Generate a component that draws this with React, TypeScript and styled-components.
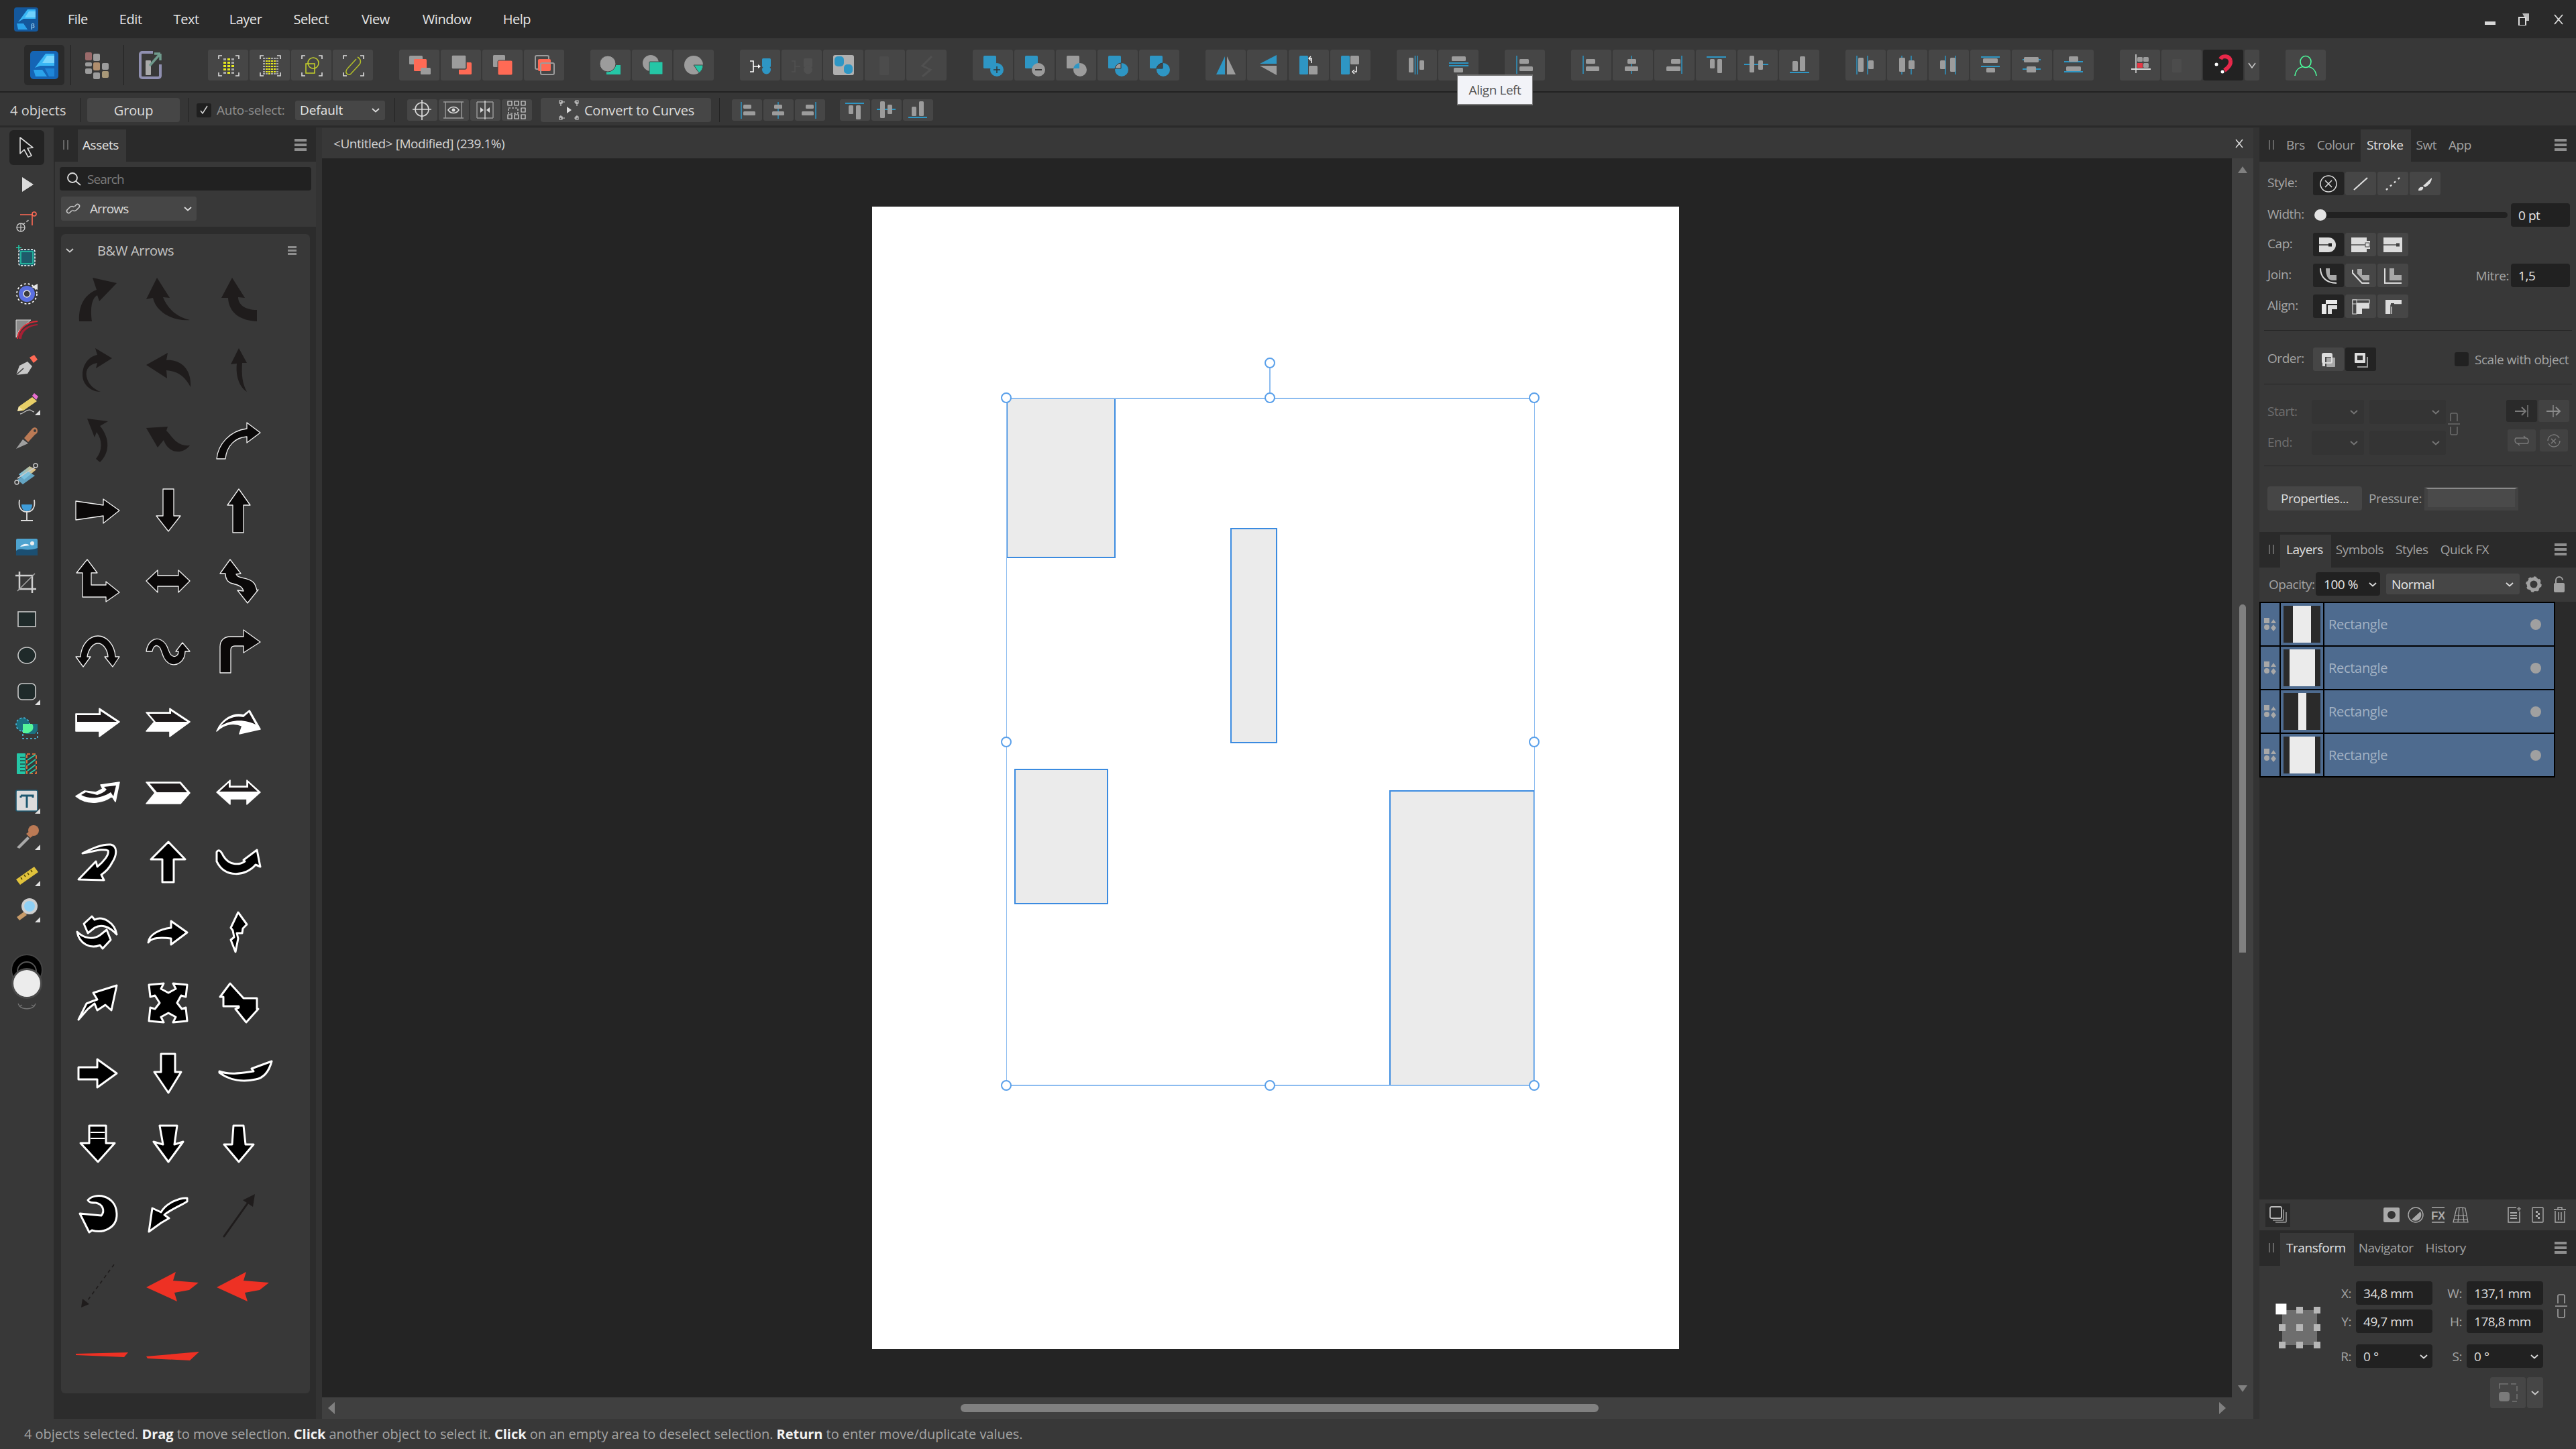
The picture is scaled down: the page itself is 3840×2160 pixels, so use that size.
import React from "react";
import styled, { createGlobalStyle } from "styled-components";

const GREY = "#9c9c9c";
const LIGHT = "#dcdcdc";
const CORAL = "#ff6a55";
const TEAL = "#25c6a6";
const BLUE = "#2e96c4";
const DIM = "#505050";

const GlobalStyle = createGlobalStyle`
  html, body { margin: 0; padding: 0; background: #383838; }
  body { font-family: "Open Sans", "Noto Sans", sans-serif; font-size: 19px; letter-spacing: -0.45px; }
  * { box-sizing: border-box; }
`;

/* ---------- small svg helpers ---------- */

type BoxProps = { x: number; y: number; w: number; h: number; c?: string; r?: number };
const B = ({ x, y, w, h, c = GREY, r = 1.5 }: BoxProps) => <rect x={x} y={y} width={w} height={h} rx={r} fill={c} />;
const Ln = ({ x1, y1, x2, y2, c = BLUE, s = 1.5 }: { x1: number; y1: number; x2: number; y2: number; c?: string; s?: number }) => (
  <line x1={x1} y1={y1} x2={x2} y2={y2} stroke={c} strokeWidth={s} />
);
const Corners = () => (
  <path d="M16 14V9h5M41 9h5v5M16 34v5h5M41 39h5v-5" fill="none" stroke={LIGHT} strokeWidth="1.6" />
);
const ChevSvg = styled.svg`
  flex: none;
`;
const Chev = ({ c = "#dcdcdc", size = 14 }: { c?: string; size?: number }) => (
  <ChevSvg width={size} height={size} viewBox="0 0 14 14"><path d="M2 5l5 4.5L12 5" fill="none" stroke={c} strokeWidth="1.8" /></ChevSvg>
);

const dotGrid = (cols: number[], rows: number[], w: number, h: number, hit: (c: number, r: number) => boolean) =>
  cols.map((x, ci) => rows.map((y, ri) => <rect key={`${ci}-${ri}`} x={x} y={y} width={w} height={h} fill={hit(ci, ri) ? "#e6e81e" : "#a8a8a8"} />));

/* ---------- main toolbar data ---------- */

type ToolItem = { icon?: React.ReactNode; dark?: boolean; narrow?: boolean };

const mainGroups: ToolItem[][] = [
  [
    { icon: <><Corners />{dotGrid([23, 29, 35], [13, 18, 23, 28, 33], 4, 3, (c, r) => c === 1 || (r > 0 && r < 4 && c === 0) || (r === 2 && c === 2))}</> },
    { icon: <><Corners />{dotGrid([20, 24, 28, 32, 36, 40], [12, 16, 20, 24, 28, 32, 35], 3, 2, (c, r) => (c > 0 && c < 5 && r > 0 && r < 6) || c === 2)}</> },
    { icon: <><Corners /><circle cx="33" cy="20" r="8" fill="none" stroke="#c6d22a" strokeWidth="1.5" /><rect x="22" y="21" width="13" height="14" fill="none" stroke="#c6d22a" strokeWidth="1.5" /></> },
    { icon: <><Corners /><path d="M37 11c5 3 6 8 2 12L27 36c-3 3-8 0-7-4 0-2 1-3 3-5l12-13" fill="none" stroke="#b3bf28" strokeWidth="1.5" /></> },
  ],
  [
    { icon: <><B x={15} y={9} w={20} h={13} /><B x={22} y={14} w={19} h={18} c={CORAL} /><B x={32} y={27} w={15} h={10} /></> },
    { icon: <><B x={27} y={19} w={19} h={18} c={CORAL} /><rect x="16" y="8" width="22" height="21" rx="2" fill="#9c9c9c" stroke="#454545" strokeWidth="1.5" /></> },
    { icon: <><B x={16} y={8} w={18} h={18} /><rect x="23" y="16" width="22" height="22" rx="2" fill={CORAL} stroke="#454545" strokeWidth="1" /></> },
    { icon: <><rect x="17" y="9" width="20" height="20" rx="2" fill="none" stroke={GREY} strokeWidth="2" /><rect x="21" y="14" width="19" height="18" rx="2" fill={CORAL} /><rect x="25" y="20" width="20" height="17" rx="2" fill="none" stroke={GREY} strokeWidth="2" /></> },
  ],
  [
    { icon: <><path d="M24 23h21v14H24z" fill={TEAL} /><circle cx="26" cy="21" r="12" fill={GREY} stroke="#454545" strokeWidth="1" /></> },
    { icon: <><circle cx="28" cy="20" r="12" fill={GREY} /><rect x="26" y="18" width="20" height="19" rx="1" fill={TEAL} stroke="#454545" strokeWidth="1" /></> },
    { icon: <><circle cx="30" cy="23" r="14" fill={GREY} /><path d="M30 23h14a14 14 0 0 1-6 11.5L30 23z" fill={TEAL} stroke="#454545" strokeWidth="1" /></> },
  ],
  [
    { icon: <><path d="M15 17h5v16h-5M20 25h8" fill="none" stroke="#fff" strokeWidth="1.6" /><path d="M27 22l4 3-4 3z" fill="#fff" /><B x={33} y={13} w={13} h={13} c={BLUE} /><circle cx="39.5" cy="30" r="6.5" fill={BLUE} /></> },
    { icon: <><path d="M15 17h5v16h-5M20 25h8" fill="none" stroke={DIM} strokeWidth="1.6" /><B x={33} y={13} w={13} h={13} c={DIM} /><circle cx="39.5" cy="30" r="6.5" fill={DIM} /></> },
    { icon: <><B x={15} y={8} w={31} h={30} c="#b0b0b0" r={3} /><B x={17} y={10} w={14} h={15} c={BLUE} r={5} /><B x={31} y={22} w={13} h={14} c={BLUE} r={5} /></> },
    { icon: <B x={22} y={10} w={14} h={28} c="#4c4c4c" /> },
    { icon: <path d="M38 10L24 24l12 6-12 10" fill="none" stroke="#505050" strokeWidth="3" /> },
  ],
  [
    { icon: <><circle cx="36" cy="30" r="10" fill={BLUE} /><B x={16} y={9} w={19} h={19} c={BLUE} /><Ln x1={36} y1={25} x2={36} y2={35} c="#333" /><Ln x1={31} y1={30} x2={41} y2={30} c="#333" /></> },
    { icon: <><B x={16} y={9} w={19} h={19} c={BLUE} /><circle cx="36" cy="30" r="10" fill={GREY} /><Ln x1={31} y1={30} x2={41} y2={30} c="#333" s={2} /></> },
    { icon: <><circle cx="36" cy="30" r="10" fill={GREY} /><B x={16} y={9} w={19} h={19} c={GREY} /><path d="M26 28h9v-8a10 10 0 0 0-9 8z" fill={BLUE} /></> },
    { icon: <><B x={16} y={9} w={19} h={19} c={BLUE} /><circle cx="36" cy="30" r="10" fill={BLUE} /><path d="M26 28h9v-8a10 10 0 0 0-9 8z" fill={GREY} stroke="#333" strokeWidth="1" /></> },
    { icon: <><B x={16} y={9} w={19} h={19} c={BLUE} /><circle cx="36" cy="30" r="10" fill={BLUE} /><path d="M26 28h9v-8a10 10 0 0 0-9 8z" fill="#454545" stroke="#333" strokeWidth="1" /></> },
  ],
  [
    { icon: <><path d="M29 10v27H16z" fill={BLUE} /><path d="M32 10v27h13z" fill={GREY} /></> },
    { icon: <><path d="M44 8v13H19z" fill={BLUE} /><path d="M44 38V24H19z" fill={GREY} /></> },
    { icon: <><B x={16} y={9} w={13} h={28} c={BLUE} /><B x={30} y={24} w={13} h={13} /><path d="M34 20v-7h-3M33 10l-3 3 3 3" fill="none" stroke="#fff" strokeWidth="1.4" /></> },
    { icon: <><B x={16} y={9} w={13} h={28} c={BLUE} /><B x={30} y={9} w={13} h={13} /><path d="M39 25v8h-3M36 30l-3 3 3 3" fill="none" stroke="#fff" strokeWidth="1.4" /></> },
  ],
  [
    { icon: <><B x={18} y={12} w={7} h={22} /><Ln x1={27.5} y1={9} x2={27.5} y2={37} /><Ln x1={31} y1={9} x2={31} y2={37} /><B x={34} y={16} w={7} h={14} /></> },
    { icon: <><B x={20} y={10} w={21} h={7} /><Ln x1={16} y1={20} x2={45} y2={20} s={2} /><Ln x1={16} y1={24} x2={45} y2={24} s={2} /><B x={23} y={27} w={14} h={7} /></> },
  ],
  [
    { icon: <><Ln x1={18} y1={9} x2={18} y2={36} /><B x={22} y={14} w={14} h={7} /><B x={22} y={25} w={20} h={7} /></> },
  ],
  [
    { icon: <><Ln x1={18} y1={9} x2={18} y2={36} /><B x={22} y={14} w={14} h={7} /><B x={22} y={25} w={20} h={7} /></> },
    { icon: <><Ln x1={28} y1={9} x2={28} y2={36} /><B x={22} y={14} w={13} h={7} /><B x={18} y={25} w={20} h={7} /></> },
    { icon: <><Ln x1={41} y1={9} x2={41} y2={36} /><B x={25} y={14} w={14} h={7} /><B x={18} y={25} w={21} h={7} /></> },
    { icon: <><Ln x1={16} y1={11} x2={45} y2={11} s={2} /><B x={21} y={14} w={7} h={14} /><B x={32} y={14} w={7} h={21} /></> },
    { icon: <><Ln x1={10} y1={22} x2={46} y2={22} s={2} /><B x={18} y={9} w={7} h={25} /><B x={31} y={16} w={7} h={14} /></> },
    { icon: <><Ln x1={16} y1={34} x2={45} y2={34} s={2} /><B x={20} y={17} w={8} h={15} /><B x={31} y={10} w={8} h={22} /></> },
  ],
  [
    { icon: <><Ln x1={17} y1={9} x2={17} y2={37} /><Ln x1={33} y1={9} x2={33} y2={37} /><B x={19} y={12} w={8} h={21} /><B x={34} y={16} w={8} h={13} /></> },
    { icon: <><Ln x1={22} y1={9} x2={22} y2={37} /><Ln x1={36} y1={9} x2={36} y2={37} /><B x={18} y={12} w={9} h={21} /><B x={32} y={16} w={9} h={13} /></> },
    { icon: <><Ln x1={25} y1={9} x2={25} y2={37} /><Ln x1={40} y1={9} x2={40} y2={37} /><B x={17} y={16} w={8} h={13} /><B x={32} y={12} w={8} h={21} /></> },
    { icon: <><Ln x1={16} y1={11} x2={44} y2={11} s={2} /><Ln x1={16} y1={25} x2={44} y2={25} s={2} /><B x={19} y={13} w={22} h={7} /><B x={24} y={27} w={13} h={7} /></> },
    { icon: <><Ln x1={16} y1={15} x2={43} y2={15} s={2} /><Ln x1={16} y1={29} x2={43} y2={29} s={2} /><B x={18} y={11} w={22} h={8} /><B x={22} y={25} w={14} h={9} /></> },
    { icon: <><Ln x1={16} y1={18} x2={44} y2={18} s={2} /><Ln x1={16} y1={33} x2={44} y2={33} s={2} /><B x={23} y={10} w={14} h={8} /><B x={19} y={25} w={22} h={7} /></> },
  ],
  [
    { icon: <><B x={26} y={11} w={8} h={7} /><B x={35} y={11} w={8} h={7} /><B x={26} y={20} w={8} h={7} c="#e63946" r={0} /><B x={35} y={20} w={8} h={7} /><Ln x1={24} y1={7} x2={24} y2={35} c="#ddd" /><Ln x1={17} y1={29} x2={46} y2={29} c="#ddd" s={2} /></> },
    { icon: <B x={16} y={14} w={14} h={20} c="#4c4c4c" /> },
    { dark: true, icon: <><path d="M26 14c3-6 14-5 15 3 1 6-5 11-9 14" fill="none" stroke="#e8284a" strokeWidth="6" /><circle cx="20" cy="22" r="2.5" fill="#fff" /><circle cx="29" cy="33" r="2.5" fill="#fff" /></> },
    { narrow: true, icon: <path d="M6 20l5 7 5-7" fill="none" stroke="#cfcfcf" strokeWidth="1.4" /> },
  ],
  [
    { icon: <><ellipse cx="30" cy="18" rx="8" ry="8.5" fill="none" stroke="#4dff9e" strokeWidth="1.6" /><path d="M14 39c1-8 6-13 13-13.5M46 39c-1-8-6-13-13-13.5" fill="none" stroke="#4dff9e" strokeWidth="1.6" /></> },
  ],
];

const ctxIcons = [
  <><circle cx="22" cy="15" r="10" fill="none" stroke={LIGHT} strokeWidth="1.6" /><path d="M22 1v30M8 15h28" stroke={LIGHT} strokeWidth="1.6" /></>,
  <><path d="M7 4h30M7 28h30M10 4v24M34 4v24" stroke={GREY} strokeWidth="1.4" /><path d="M14 16c4-6 12-6 16 0-4 6-12 6-16 0z" fill="none" stroke={LIGHT} strokeWidth="1.6" /><circle cx="22" cy="16" r="2.5" fill={LIGHT} /></>,
  <><path d="M10 4h24M10 28h24M10 4v24M34 4v24" fill="none" stroke={GREY} strokeWidth="1.4" /><path d="M22 2v28" stroke={LIGHT} strokeWidth="1.4" /><path d="M15 12l5 4-5 4zM29 12l-5 4 5 4z" fill={LIGHT} /></>,
  <><path d="M9 3h6v6H9zM19 3h6v6h-6zM29 3h6v6h-6zM29 13h6v6h-6zM29 23h6v6h-6zM9 23h6v6H9zM19 23h6v6h-6z" fill="none" stroke={LIGHT} strokeWidth="1.2" /><path d="M10 13h14v8H10z" fill="none" stroke={LIGHT} strokeWidth="1.2" strokeDasharray="3 2" /></>,
];
const ctxAlign = [
  <><Ln x1={14} y1={4} x2={14} y2={29} /><B x={17} y={8} w={12} h={6} /><B x={17} y={18} w={18} h={6} /></>,
  <><Ln x1={22} y1={4} x2={22} y2={29} /><B x={16} y={8} w={12} h={6} /><B x={13} y={18} w={18} h={6} /></>,
  <><Ln x1={31} y1={4} x2={31} y2={29} /><B x={16} y={8} w={12} h={6} /><B x={10} y={18} w={18} h={6} /></>,
  <><Ln x1={8} y1={6} x2={36} y2={6} s={2} /><B x={13} y={9} w={7} h={13} /><B x={24} y={9} w={7} h={21} /></>,
  <><Ln x1={8} y1={15} x2={36} y2={15} s={2} /><B x={13} y={3} w={7} h={25} /><B x={24} y={8} w={7} h={14} /></>,
  <><Ln x1={8} y1={27} x2={36} y2={27} s={2} /><B x={13} y={11} w={7} h={14} /><B x={24} y={3} w={7} h={22} /></>,
];

/* ---------- left tools ---------- */

type ToolDef = { icon: React.ReactNode; more?: boolean; active?: boolean };
const tools: ToolDef[] = [
  { active: true, icon: <path d="M10 5v24l6-6 6 11 5-2-6-11 8-1z" fill="#1c1c1c" stroke="#dcdcdc" strokeWidth="1.6" strokeLinejoin="round" /> },
  { icon: <path d="M13 9v22l17-11z" fill="#dcdcdc" /> },
  { icon: <><path d="M10 11h18v16" fill="none" stroke={CORAL} strokeWidth="1.6" /><circle cx="31" cy="10" r="3" fill="none" stroke={CORAL} strokeWidth="1.6" /><path d="M14 26l11-9" stroke="#bbb" strokeWidth="1.6" strokeDasharray="4 3" /><circle cx="11" cy="30" r="6" fill="none" stroke="#ccc" strokeWidth="1.4" /><path d="M5 30h12M11 24v12" stroke="#ccc" strokeWidth="1.2" /></> },
  { icon: <><rect x="8" y="9" width="24" height="24" rx="3" fill="#1e5b6b" stroke="#fff" strokeWidth="1.5" strokeDasharray="3 2" /><rect x="11" y="12" width="18" height="18" fill="none" stroke={TEAL} strokeWidth="1.6" /><path d="M8 2v8M4 6h8" stroke={TEAL} strokeWidth="1.6" /></> },
  { icon: <><circle cx="20" cy="21" r="15" fill="none" stroke="#fff" strokeWidth="1.6" strokeDasharray="3 3" /><ellipse cx="20" cy="21" rx="12" ry="12" fill="#5a6fe0" /><circle cx="20" cy="21" r="5" fill="#3a3a3a" stroke="#ddd" strokeWidth="1.6" /><path d="M36 6v9l-9-4z" fill="#e6e6e6" /></> },
  { icon: <><path d="M4 6h22L8 22 4 32z" fill="#8a8a8a" stroke="#ddd" strokeWidth="1" /><path d="M6 34c1-14 12-25 30-26" fill="none" stroke="#e02b36" strokeWidth="2" /><path d="M12 34c1-12 12-19 24-20v-2C20 13 8 22 8 34z" fill="#a81f34" /></> },
  { icon: <><path d="M4 34l5-14 12-6 7 7-7 11z" fill="#c8c8c8" /><path d="M4 34l11-10" stroke="#333" strokeWidth="1.4" /><path d="M24 8l7-4 5 7-6 5z" fill={CORAL} /></> },
  { more: true, icon: <><path d="M6 34l2-7 20-14 7 6-20 14z" fill="#e8cf67" /><path d="M6 34l2-7 6 5z" fill="#f0e3b0" /><path d="M28 11l3-4 6 5-3 5z" fill="#e86fd0" /><path d="M10 38c6-1 8-6 14-6 3 0 4 3 7 3" fill="none" stroke="#bbb" strokeWidth="1.3" /></> },
  { icon: <><path d="M4 36l10-14 8 6z" fill="#a0a0a0" /><path d="M16 20L28 6c3-3 8-2 8 3 0 3-1 4-4 6L22 26z" fill="#bb7a55" /><circle cx="32" cy="9" r="2" fill="#3a3a3a" /></> },
  { icon: <><path d="M8 20L24 8l10 5-18 15z" fill="url(#toolGrad)" /><path d="M6 26L32 10" stroke="#ccc" strokeWidth="1.6" /><path d="M6 28l16-12 10 6-18 13z" fill="#6fc0e6" opacity=".8" /><circle cx="5" cy="32" r="3" fill="none" stroke="#ccc" strokeWidth="1.4" /><circle cx="33" cy="7" r="3" fill="none" stroke="#ccc" strokeWidth="1.4" /></> },
  { icon: <><path d="M9 4c-2 12 3 18 11 18s13-6 11-18" fill="none" stroke="#ddd" strokeWidth="1.8" /><path d="M12 11h16c0 6-3 10-8 10s-8-4-8-10z" fill="#3f9cd8" /><path d="M20 22v12M11 35h18" stroke="#ddd" strokeWidth="1.8" /></> },
  { icon: <><rect x="4" y="8" width="32" height="25" rx="2" fill="#4ea3cf" /><path d="M4 26c8-6 12 2 32-4v11H4z" fill="#1b4f72" /><circle cx="28" cy="15" r="3" fill="#eee" /><path d="M10 20c3-4 10-6 14-2z" fill="#eaf3f9" /></> },
  { icon: <><path d="M9 3v26h25M3 9h25v26" fill="none" stroke="#cfcfcf" strokeWidth="2.5" /><path d="M6 32L32 6" stroke="#aaa" strokeWidth="1.4" /></> },
  { icon: <rect x="7" y="9" width="26" height="22" fill="#1f2a2a" stroke="#c8c8c8" strokeWidth="1.6" /> },
  { icon: <ellipse cx="20" cy="20" rx="13" ry="12" fill="#1f2a2a" stroke="#c8c8c8" strokeWidth="1.6" /> },
  { more: true, icon: <rect x="7" y="8" width="26" height="24" rx="6" fill="#1f2a2a" stroke="#c8c8c8" strokeWidth="1.6" /> },
  { icon: <><circle cx="14" cy="15" r="10" fill="#1b6f80" stroke="#52c2e8" strokeWidth="1.5" strokeDasharray="3 3" /><path d="M14 24h22v12H14z" fill="none" stroke="#52c2e8" strokeWidth="1.5" strokeDasharray="3 3" /><path d="M14 14h22v10l-4 5H18z" fill="#1b6f80" /><path d="M14 14h14c2 3 2 7 0 10l-6 4h-8z" fill="#56f59a" /></> },
  { icon: <><rect x="5" y="4" width="13" height="31" rx="1" fill={TEAL} /><path d="M10 10h7M10 15h7M10 20h7M10 25h7M10 30h7" stroke="#1f4a44" strokeWidth="1.4" /><rect x="20" y="5" width="14" height="29" fill="none" stroke="#ff7a3c" strokeWidth="1.6" strokeDasharray="5 3" /><path d="M21 14l12-8M21 22l12-9M21 30l12-9M24 34l9-6" stroke={TEAL} strokeWidth="2" /></> },
  { more: true, icon: <><rect x="4" y="5" width="32" height="31" rx="2" fill="#dcdcdc" stroke="#1d5870" strokeWidth="1.6" /><path d="M11 13h18v3M11 13v3M20 13v18" fill="none" stroke="#1d5870" strokeWidth="3" /></> },
  { more: true, icon: <><path d="M5 36l16-16 3 3L9 38z" fill="#a8a8a8" /><circle cx="30" cy="11" r="8" fill="#bb7a55" /><path d="M19 16l6 6 4-3-6-6z" fill="#bb7a55" /></> },
  { more: true, icon: <><path d="M4 30L31 11l6 8-27 19z" fill="#e0c23c" /><path d="M11 27l2 3M16 23l2 3M21 20l2 3M26 16l2 3" stroke="#5a4a00" strokeWidth="1.6" /></> },
  { more: true, icon: <><path d="M5 32l11-8 4 5-11 8z" fill="#c69a68" /><circle cx="24" cy="16" r="12" fill="#cfcfcf" /><circle cx="24" cy="16" r="8" fill="#8fd0f5" /></> },
];

/* ---------- asset arrows ---------- */

type ArrowKind = "dark" | "thin" | "split" | "thick" | "red";
type ArrowDef = { d: string; kind: ArrowKind; extra?: React.ReactNode };

const splitTop = (d: string) => <path d={d} fill="#1f1b1c" />;

const arrows: ArrowDef[] = [
  { kind: "dark", d: "M25 85C24 62 32 46 51 38L45 20 81 28 55 55 52 46C42 52 42 70 44 85Z" },
  { kind: "dark", d: "M36 20 55 50 45 49C50 62 62 78 85 83 60 85 35 72 30 50L20 52Z" },
  { kind: "dark", d: "M43 20 62 50 52 49C52 60 62 68 80 68L80 85C55 84 38 72 37 50L27 50Z" },
  { kind: "dark", d: "M74 35 50 50 52 42C40 44 34 52 36 62 38 74 48 82 57 85 42 85 30 74 30 60 30 44 40 32 52 30L49 20Z" },
  { kind: "dark", d: "M20 45 52 27 50 38C70 36 88 50 86 78 78 62 66 54 50 53L51 65Z" },
  { kind: "dark", d: "M53 20 65 42 58 42C57 60 58 72 65 85 54 78 48 62 50 43L41 44Z" },
  { kind: "dark", d: "M37 20 68 24 56 31C72 50 70 72 56 85L50 80C60 68 60 52 51 40L48 48Z" },
  { kind: "dark", d: "M20 34 52 32 50 38C58 45 64 62 85 60 72 76 52 70 46 52L37 63Z" },
  { kind: "thin", d: "M20 80C22 58 40 38 65 35L65 26 85 41 65 56 65 47C48 48 35 60 33 80Z" },
  { kind: "thin", d: "M20 38 61 44 61 35 85 52 61 71 61 60 20 66Z" },
  { kind: "thin", d: "M45 20 61 20 61 60 71 60 53 83 35 60 45 60Z" },
  { kind: "thin", d: "M53 20 70 44 60 44 60 85 44 85 44 44 36 44Z" },
  { kind: "thin", d: "M37 20 52 40 43 40 43 58 65 58 65 53 85 69 65 83 65 76 30 76 30 40 21 40Z" },
  { kind: "thin", d: "M20 52 37 36 37 44 68 44 68 36 85 52 68 69 68 60 37 60 37 69Z" },
  { kind: "thin", d: "M40 20 56 41 49 42C52 48 58 46 68 50 78 54 78 60 80 66L82 65 66 85 51 66 60 67C58 60 52 58 44 56 34 54 33 46 33 41L25 41Z" },
  { kind: "thin", d: "M31 75 20 60 27 60C28 42 40 29 53 29 66 29 78 42 79 60L85 60 75 75 63 60 68 60C67 48 60 40 53 40 46 40 39 48 37 60L42 60Z" },
  { kind: "thin", d: "M20 52C22 38 32 30 42 35 52 40 52 50 56 56 60 62 68 60 68 52L64 52 74 39 85 52 78 52C78 66 66 76 54 70 44 64 44 52 40 46 34 40 30 46 29 52Z" },
  { kind: "thin", d: "M25 84 25 45C25 35 32 30 40 30L60 30 60 20 85 38 60 54 60 44 47 44C43 44 41 46 41 50L41 84Z" },
  { kind: "split", d: "M20 40 55 40 55 32 85 52 55 74 55 66 20 66Z", extra: splitTop("M22 42H57V36L81 52H22Z") },
  { kind: "split", d: "M20 38 55 38 55 32 85 52 55 74 55 66 20 66 32 52Z", extra: splitTop("M24 40H57V36L81 52H34Z") },
  { kind: "split", d: "M20 66C28 48 44 38 60 42L69 35 85 63 54 70 58 58C44 52 30 56 20 66Z", extra: splitTop("M26 58C34 48 46 42 60 45L68 38 78 56C66 50 46 46 26 58Z") },
  { kind: "split", d: "M20 58 33 50 50 52C55 50 58 48 60 47L57 41 85 37 79 66 74 58C64 66 40 74 20 58Z", extra: splitTop("M28 56 35 52 52 56C58 54 62 52 66 48L62 44 80 42 76 58 72 52C60 60 42 64 28 56Z") },
  { kind: "split", d: "M20 37 71 37 85 53 71 69 20 69 33 53Z", extra: splitTop("M25 39H70L81 52H36Z") },
  { kind: "split", d: "M20 52 40 34 40 43 65 43 65 34 85 52 65 70 65 62 40 62 40 70Z", extra: splitTop("M24 51 38 38V45H67V38L81 51Z") },
  { kind: "thick", d: "M30 38C45 30 60 24 72 25 82 27 82 40 74 52 70 60 64 66 58 70L62 78 24 77 50 50 52 58C62 50 70 40 68 34 60 30 45 36 30 38Z" },
  { kind: "thick", d: "M53 21 78 47 61 47 61 81 44 81 44 47 27 47Z" },
  { kind: "thick", d: "M20 36C24 30 28 38 30 42 38 56 54 56 62 50L60 48 80 33 85 58 78 55C64 72 32 76 20 50Z" },
  { kind: "thick", d: "M81 54C78 36 60 26 48 32L44 27 32 38 38 52 48 44C58 38 70 42 81 54ZM22 50C25 68 42 76 56 70L60 75 72 62 66 47 56 55C46 62 32 60 22 50Z" },
  { kind: "thick", d: "M23 66C24 54 40 46 57 44L57 34 81 51 57 69 57 60C42 58 28 58 23 66Z" },
  { kind: "thick", d: "M52 21 65 39 59 45 58 52 50 52 52 60 48 80 41 62 46 58 44 48 41 44Z" },
  { kind: "thick", d: "M81 25 73 62 64 54 52 62 48 52 38 60 24 76 36 52 46 48 52 46 46 36Z" },
  { kind: "thick", d: "M24 24 46 22 42 30 53 36 64 30 60 22 81 24 79 42 72 40 66 51 73 60 79 58 81 78 60 80 64 72 53 66 42 72 46 80 24 78 26 58 33 60 40 51 33 40 26 42Z" },
  { kind: "thick", d: "M40 22 60 44 80 44 80 60 82 60 64 80 48 60 53 58 53 56 30 56 30 42 25 42Z" },
  { kind: "thick", d: "M24 42 52 42 52 30 81 51 52 72 52 60 24 60Z" },
  { kind: "thick", d: "M42 22 63 22 63 49 72 49 53 80 32 49 42 49Z" },
  { kind: "thick", d: "M24 48C40 54 60 50 75 48L72 44 102 33C98 48 90 58 78 60 60 64 40 62 24 50Z" },
  { kind: "thick", d: "M40 24 65 24 65 50 78 50 53 78 27 50 40 50Z", extra: <path d="M42 34H63M42 43H63" stroke="#fff" strokeWidth="2" /> },
  { kind: "thick", d: "M40 24 66 24 62 52 75 48 53 78 31 48 45 52Z" },
  { kind: "thick", d: "M45 24 60 24 63 52 75 52 53 78 31 52 43 52Z" },
  { kind: "thick", d: "M38 30C48 18 80 22 81 50 82 72 60 80 44 75L40 78 26 50 58 53C64 46 60 36 50 34 44 34 40 34 38 30Z" },
  { kind: "thick", d: "M81 27C70 26 50 34 42 48L29 42 24 77 42 64 54 57 47 52C56 44 72 38 81 32Z" },
  { kind: "dark", d: "", extra: <><path d="M31 84L68 32" stroke="#1f1c1c" strokeWidth="3" strokeLinecap="round" /><path d="M77 21l-18 9 15 10z" fill="#1f1c1c" /></> },
  { kind: "dark", d: "", extra: <><path d="M77 21L35 78" stroke="#1f1c1c" strokeWidth="1.6" strokeDasharray="5 5" /><path d="M28 85l2-13 10 8z" fill="#1f1c1c" /></> },
  { kind: "red", d: "M20 55 64 32 60 45 98 48 84 59 62 63 66 76Z" },
  { kind: "red", d: "M20 55 64 32 60 45 98 48 84 59 62 63 66 76Z" },
  { kind: "red", d: "M20 49 98 47 92 54 20 51Z" },
  { kind: "red", d: "M20 53 99 46 85 59 22 56Z" },
];

/* ---------- stroke panel icons ---------- */

const strokeIcons = {
  none: <><circle cx="23" cy="18" r="12" fill="none" stroke={LIGHT} strokeWidth="1.5" /><path d="M18 13l10 10M28 13L18 23" stroke={LIGHT} strokeWidth="1.5" /></>,
  line: <path d="M13 27L33 9" stroke={LIGHT} strokeWidth="2.2" />,
  dash: <path d="M13 27L33 9" stroke={LIGHT} strokeWidth="2.4" strokeDasharray="3 5" />,
  brush: <><path d="M13 28c0-5 4-6 7-5 1 3-2 6-7 5z" fill={LIGHT} /><path d="M20 21L33 9c0 6-4 11-10 14z" fill={LIGHT} /></>,
  capRound: <><path d="M9 7h14a11 11 0 0 1 0 22H9z" fill={LIGHT} /><path d="M9 18h16" stroke="#222" strokeWidth="1.4" /><rect x="23" y="15.5" width="5" height="5" fill="#222" /></>,
  capSquare: <><path d="M9 7h23v5h5v12h-5v5H9z" fill={LIGHT} /><path d="M9 18h26" stroke="#444" strokeWidth="1.4" /><rect x="30" y="15" width="6" height="6" fill={LIGHT} stroke="#444" /></>,
  capButt: <><path d="M9 7h28v22H9z" fill={LIGHT} /><path d="M9 18h21" stroke="#444" strokeWidth="1.4" /><rect x="28" y="15.5" width="5" height="5" fill="#444" /></>,
  joinRound: <><path d="M11 7c0 12 8 22 24 22" fill="none" stroke={LIGHT} strokeWidth="2" /><path d="M19 7h6v10h10v8H28c-6-1-9-8-9-18z" fill="#a8a8a8" /></>,
  joinBevel: <><path d="M11 9v5l14 15h11" fill="none" stroke={LIGHT} strokeWidth="2" /><path d="M18 8h7v9h11v8H27L18 15z" fill="#a8a8a8" /></>,
  joinMiter: <><path d="M11 7v22h25" fill="none" stroke={LIGHT} strokeWidth="2" /><path d="M18 7h7v10h11v8H18z" fill="#a8a8a8" /></>,
  alignIn: <><path d="M13 8h23v6H20v15h-7z" fill="#fff" opacity=".9" /><path d="M22 16h14v6h-8v7h-6z" fill={LIGHT} /><rect x="13" y="8" width="6" height="6" fill="#222" /></>,
  alignMid: <><path d="M11 8h25v5H17v16h-6z" fill="none" stroke={LIGHT} strokeWidth="1.2" /><path d="M17 13h19v8H25v8h-8z" fill={LIGHT} /><rect x="11" y="8" width="6" height="6" fill="#444" stroke={LIGHT} /></>,
  alignOut: <><path d="M12 8h24v7H22v14H12z" fill={LIGHT} /><path d="M20 15h16M20 15v14" stroke="#444" strokeWidth="1.4" /><rect x="20" y="13" width="5" height="5" fill="#444" /></>,
  front: <><path d="M14 10h14v4H18v14h-4z" fill={LIGHT} /><rect x="20" y="15" width="13" height="14" rx="1" fill="#a8a8a8" /><rect x="14" y="9" width="14" height="14" fill="none" stroke={LIGHT} strokeWidth="2" rx="2" /></>,
  back: <><rect x="14" y="8" width="16" height="15" fill={LIGHT} rx="1" /><rect x="18" y="12" width="8" height="7" fill="#333" /><path d="M33 14v15H18" fill="none" stroke="#9a9a9a" strokeWidth="2" /></>,
};

/* ---------- page content ---------- */

const pageRects = [
  { x: 200, y: 285, w: 163, h: 239 },
  { x: 534, y: 479, w: 70, h: 321 },
  { x: 212, y: 838, w: 140, h: 202 },
  { x: 771, y: 870, w: 217, h: 441 },
];
const handles = [
  [0, 0], [393, 0], [787, 0],
  [0, 513], [787, 513],
  [0, 1025], [393, 1025], [787, 1025],
  [393, -52],
];

const layers = [
  { offset: 14, width: 27 },
  { offset: 9, width: 38 },
  { offset: 22, width: 12 },
  { offset: 9, width: 38 },
];

const menu = ["File", "Edit", "Text", "Layer", "Select", "View", "Window", "Help"];

/* ---------- app ---------- */

const Grip = () => (
  <GripMark><i /><i /></GripMark>
);
const Burger = () => (
  <BurgerMark><i /><i /><i /></BurgerMark>
);

const App: React.FC = () => {
  return (
    <Root>
      <GlobalStyle />

      <TitleBar>
        <LogoSlot>
          <svg width="36" height="36" viewBox="0 0 36 36">
            <rect width="36" height="36" rx="4" fill="#14589c" />
            <path d="M6 22L20 3h12v14H14z" fill="#38b6f5" />
            <path d="M4 24h10l6 9H6z" fill="#2ba3ea" />
            <path d="M22 6h10v9H16z" fill="#6ed0fb" />
            <text x="25" y="31" fill="#bfe6ff" fontSize="11" fontFamily="Liberation Serif, serif">β</text>
          </svg>
        </LogoSlot>
        <MenuList>
          {menu.map(item => <MenuItem key={item}>{item}</MenuItem>)}
        </MenuList>
        <WindowButtons>
          <svg width="16" height="16" viewBox="0 0 16 16"><rect x="0" y="11" width="16" height="5" fill="#d8d8d8" /></svg>
          <svg width="18" height="18" viewBox="0 0 18 18"><path d="M6 0h10v11h-4M6 4V0" fill="#bbb" /><rect x="1" y="6" width="10" height="12" fill="#2a2a2a" stroke="#ddd" strokeWidth="2" /></svg>
          <svg width="16" height="16" viewBox="0 0 16 16"><path d="M2 1l12 14M14 1L2 15" stroke="#ddd" strokeWidth="1.7" /></svg>
        </WindowButtons>
      </TitleBar>

      <MainToolbar>
        <LeftCluster>
          <PersonaButton>
            <svg width="42" height="42" viewBox="0 0 42 42">
              <rect width="42" height="42" rx="5" fill="#1565b5" />
              <path d="M7 25L23 4h13v18H15z" fill="#38b6f5" />
              <path d="M5 28h13l7 10H8z" fill="#2ba3ea" />
              <path d="M25 7h11v11H18z" fill="#7ad6fc" />
              <path d="M22 26h14v12H28z" fill="#1e86d8" />
            </svg>
          </PersonaButton>
          <ClusterSep $ml={9} />
          <ClusterSlot>
            <svg width="40" height="46" viewBox="0 0 40 46">
              <rect x="2" y="4" width="10" height="12" rx="2" fill="#9a6a6a" />
              <rect x="14" y="6" width="10" height="11" rx="2" fill={GREY} />
              <rect x="2" y="19" width="10" height="6" rx="2" fill={GREY} />
              <rect x="14" y="19" width="10" height="12" rx="2" fill="#b08e6e" />
              <rect x="27" y="20" width="10" height="10" rx="2" fill={GREY} />
              <rect x="14" y="34" width="10" height="10" rx="2" fill={GREY} />
              <rect x="27" y="32" width="10" height="10" rx="2" fill="#a89878" />
              <rect x="2" y="28" width="10" height="8" rx="2" fill={GREY} />
            </svg>
          </ClusterSlot>
          <ClusterSep />
          <ClusterSlot>
            <svg width="40" height="46" viewBox="0 0 40 46">
              <path d="M24 4H8a3 3 0 0 0-3 3v32a3 3 0 0 0 3 3h24a3 3 0 0 0 3-3V22" fill="none" stroke="#8f8fb0" strokeWidth="4" />
              <rect x="13" y="16" width="8" height="22" rx="1" fill="#aaa" />
              <path d="M19 24L35 6m0 0h-9m9 0v10" fill="none" stroke="#6f9a8c" strokeWidth="3.5" />
            </svg>
          </ClusterSlot>
        </LeftCluster>
        {mainGroups.map((group, gi) => (
          <BtnGroup key={gi}>
            {group.map((item, bi) => (
              <ToolButton key={bi} $dark={item.dark} $narrow={item.narrow}>
                {item.narrow ? (
                  <svg width="22" height="46" viewBox="0 0 22 46">{item.icon}</svg>
                ) : (
                  <svg width="60" height="46" viewBox="0 0 60 46">{item.icon}</svg>
                )}
              </ToolButton>
            ))}
          </BtnGroup>
        ))}
      </MainToolbar>

      <ContextBar>
        <ObjectCount>4 objects</ObjectCount>
        <CtxSep $l={0} $r={10} />
        <CtxButton $w={138}>Group</CtxButton>
        <CtxSep $l={12} $r={12} />
        <CheckBox>
          <svg width="14" height="14" viewBox="0 0 14 14"><path d="M2 8l3 4 7-11" fill="none" stroke="#ddd" strokeWidth="1.4" /></svg>
        </CheckBox>
        <AutoLabel>Auto-select:</AutoLabel>
        <DefaultSelect>Default<Chev c="#ddd" /></DefaultSelect>
        <CtxSep $l={14} $r={18} />
        <CtxGroup>
          {ctxIcons.map((ic, i) => <CtxIconBtn key={i}><svg width="45" height="32" viewBox="0 0 45 32">{ic}</svg></CtxIconBtn>)}
        </CtxGroup>
        <CtxButton $w={254} $ml={13}>
          <svg width="34" height="34" viewBox="0 0 34 34">
            <path d="M5 5h24M5 29h24M5 5v24M29 5v24" stroke="#cfcfcf" strokeWidth="1.2" strokeDasharray="6 14" fill="none" />
            <rect x="3" y="3" width="4" height="4" fill="none" stroke="#ddd" /><rect x="27" y="3" width="4" height="4" fill="none" stroke="#ddd" />
            <rect x="3" y="27" width="4" height="4" fill="none" stroke="#ddd" /><rect x="27" y="27" width="4" height="4" fill="none" stroke="#ddd" />
            <path d="M14 12l7 5-7 5z" fill="#ddd" />
          </svg>
          Convert to Curves
        </CtxButton>
        <CtxSep $l={12} $r={18} />
        <CtxGroup>
          {ctxAlign.slice(0, 3).map((ic, i) => <CtxIconBtn key={i}><svg width="45" height="32" viewBox="0 0 45 32">{ic}</svg></CtxIconBtn>)}
        </CtxGroup>
        <CtxGroup $ml={22}>
          {ctxAlign.slice(3).map((ic, i) => <CtxIconBtn key={i}><svg width="45" height="32" viewBox="0 0 45 32">{ic}</svg></CtxIconBtn>)}
        </CtxGroup>
      </ContextBar>

      <Workspace>
        <ToolColumn>
          <GradientDefs width="0" height="0"><defs><linearGradient id="toolGrad"><stop stopColor="#6fc0e6" /><stop offset="1" stopColor="#f0c070" /></linearGradient></defs></GradientDefs>
          {tools.map((tool, i) => (
            <ToolSlot key={i} $active={tool.active} $more={tool.more}>
              <svg width="40" height="40" viewBox="0 0 40 40">{tool.icon}</svg>
            </ToolSlot>
          ))}
          <SwatchSlot>
            <svg width="56" height="90" viewBox="0 0 56 90">
              <circle cx="28" cy="24" r="23" fill="#000" stroke="#444" strokeWidth="2" />
              <circle cx="28" cy="26" r="14" fill="none" stroke="#555" strokeWidth="2" />
              <circle cx="28" cy="44" r="23" fill="#4a4a4a" />
              <circle cx="28" cy="44" r="20" fill="#ececec" />
              <path d="M17 78c6 5 16 5 22 0M17 78l-2-4M17 78l4-2M39 78l2-4M39 78l-4-2" fill="none" stroke="#777" strokeWidth="1.3" />
            </svg>
          </SwatchSlot>
        </ToolColumn>

        <AssetsPanel>
          <TabBar>
            <GripSlot><Grip /></GripSlot>
            <AssetsTab>Assets</AssetsTab>
            <BurgerSlot><Burger /></BurgerSlot>
          </TabBar>
          <AssetsSearch>
            <SearchField>
              <svg width="24" height="24" viewBox="0 0 24 24"><circle cx="10" cy="10" r="7" fill="none" stroke="#ddd" strokeWidth="1.8" /><path d="M15 15l7 6" stroke="#ddd" strokeWidth="1.8" /></svg>
              Search
            </SearchField>
            <CategorySelect>
              <svg width="24" height="24" viewBox="0 0 24 24"><path d="M10 15l-3 3c-2 2-6-1-4-4l4-4c2-2 5-2 6 0M14 9l3-3c2-2 6 1 4 4l-4 4c-2 2-5 2-6 0" fill="none" stroke="#c8c8c8" strokeWidth="1.6" /></svg>
              <CategoryName>Arrows</CategoryName>
              <Chev c="#ddd" />
            </CategorySelect>
          </AssetsSearch>
          <AssetsScroll>
            <AssetCard>
              <CardHeader>
                <Chev c="#ccc" />
                <CardTitle>B&amp;W Arrows</CardTitle>
                <MiniBurger><i /><i /><i /></MiniBurger>
              </CardHeader>
              <ArrowGrid>
                {arrows.map((arrow, i) => (
                  <ArrowSvg key={i} viewBox="0 0 105 105">
                    {arrow.d && <ArrowShape d={arrow.d} $kind={arrow.kind} />}
                    {arrow.extra}
                  </ArrowSvg>
                ))}
              </ArrowGrid>
            </AssetCard>
          </AssetsScroll>
        </AssetsPanel>

        <Gutter $w={9} />

        <CenterColumn>
          <DocBar>
            <DocTitle>&lt;Untitled&gt; [Modified] (239.1%)</DocTitle>
            <svg width="14" height="14" viewBox="0 0 14 14"><path d="M2 1l10 12M12 1L2 13" stroke="#ddd" strokeWidth="1.5" /></svg>
          </DocBar>
          <CenterBody>
            <CanvasColumn>
              <Canvas>
                <Page>
                  {pageRects.map((r, i) => <Shape key={i} $x={r.x} $y={r.y} $w={r.w} $h={r.h} />)}
                  <Selection>
                    <RotateStem />
                    {handles.map(([x, y], i) => <Handle key={i} $x={x} $y={y} />)}
                  </Selection>
                </Page>
              </Canvas>
              <HScroll>
                <ScrollArrowLeft />
                <HThumb />
                <ScrollArrowRight />
              </HScroll>
            </CanvasColumn>
            <VScroll>
              <ScrollArrowUp />
              <VThumb />
              <ScrollArrowDown />
            </VScroll>
          </CenterBody>
        </CenterColumn>

        <Gutter $w={9} />

        <RightPanel>
          <TabBar>
            <GripSlot><Grip /></GripSlot>
            <PlainTab>Brs</PlainTab>
            <PlainTab>Colour</PlainTab>
            <Tab>Stroke</Tab>
            <PlainTab>Swt</PlainTab>
            <PlainTab>App</PlainTab>
            <BurgerSlot><Burger /></BurgerSlot>
          </TabBar>
          <StrokeBody>
            <StrokeRow $mt={15}>
              <RowLabel>Style:</RowLabel>
              <Seg $on><SegIcon>{strokeIcons.none}</SegIcon></Seg>
              <Seg><SegIcon>{strokeIcons.line}</SegIcon></Seg>
              <Seg><SegIcon>{strokeIcons.dash}</SegIcon></Seg>
              <Seg><SegIcon>{strokeIcons.brush}</SegIcon></Seg>
            </StrokeRow>
            <StrokeRow $mt={12}>
              <RowLabel>Width:</RowLabel>
              <SliderTrack><SliderThumb /></SliderTrack>
              <ValueField $w={88} $ml={5}>0 pt</ValueField>
            </StrokeRow>
            <StrokeRow $mt={9}>
              <RowLabel>Cap:</RowLabel>
              <Seg $on><SegIcon>{strokeIcons.capRound}</SegIcon></Seg>
              <Seg><SegIcon>{strokeIcons.capSquare}</SegIcon></Seg>
              <Seg><SegIcon>{strokeIcons.capButt}</SegIcon></Seg>
            </StrokeRow>
            <StrokeRow $mt={11}>
              <RowLabel>Join:</RowLabel>
              <Seg $on><SegIcon>{strokeIcons.joinRound}</SegIcon></Seg>
              <Seg><SegIcon>{strokeIcons.joinBevel}</SegIcon></Seg>
              <Seg><SegIcon>{strokeIcons.joinMiter}</SegIcon></Seg>
              <MitreLabel>Mitre:</MitreLabel>
              <ValueField $w={88} $ml={3}>1,5</ValueField>
            </StrokeRow>
            <StrokeRow $mt={11}>
              <RowLabel>Align:</RowLabel>
              <Seg $on><SegIcon>{strokeIcons.alignIn}</SegIcon></Seg>
              <Seg><SegIcon>{strokeIcons.alignMid}</SegIcon></Seg>
              <Seg><SegIcon>{strokeIcons.alignOut}</SegIcon></Seg>
            </StrokeRow>
            <PanelRule $mt={18} />
            <StrokeRow $mt={25}>
              <RowLabel>Order:</RowLabel>
              <Seg><SegIcon>{strokeIcons.front}</SegIcon></Seg>
              <Seg $on><SegIcon>{strokeIcons.back}</SegIcon></Seg>
              <ScaleCheck />
              <ScaleLabel>Scale with object</ScaleLabel>
            </StrokeRow>
            <PanelRule $mt={19} />
            <ArrowheadRows>
              <ArrowheadFields>
                <StrokeRow $mt={0}>
                  <RowLabel $dim>Start:</RowLabel>
                  <GhostSelect $w={78}><Chev c="#777" /></GhostSelect>
                  <GhostSelect $w={114}><Chev c="#777" /></GhostSelect>
                </StrokeRow>
                <StrokeRow $mt={10}>
                  <RowLabel $dim>End:</RowLabel>
                  <GhostSelect $w={78}><Chev c="#777" /></GhostSelect>
                  <GhostSelect $w={114}><Chev c="#777" /></GhostSelect>
                </StrokeRow>
              </ArrowheadFields>
              <svg width="20" height="36" viewBox="0 0 20 36"><path d="M5 14V4a2 2 0 0 1 2-2h6a2 2 0 0 1 2 2v10M5 22v10a2 2 0 0 0 2 2h6a2 2 0 0 0 2-2V22M1 18h18" fill="none" stroke="#6a6a6a" strokeWidth="1.6" /></svg>
              <ArrowheadTools>
                <ArrowheadBtnRow>
                  <GhostBtn $w={46} $on>
                    <svg width="24" height="22" viewBox="0 0 24 22"><path d="M2 11h15M12 5l6 6-6 6" fill="none" stroke="#7a7a7a" strokeWidth="2" /><path d="M21 2v18" stroke="#7a7a7a" strokeWidth="1.5" /></svg>
                  </GhostBtn>
                  <GhostBtn $w={46}>
                    <svg width="24" height="22" viewBox="0 0 24 22"><path d="M1 11h20M15 5l6 6-6 6" fill="none" stroke="#8a8a8a" strokeWidth="2" /><path d="M11 2v18" stroke="#8a8a8a" strokeWidth="1.5" /></svg>
                  </GhostBtn>
                </ArrowheadBtnRow>
                <ArrowheadBtnRow $gap={6}>
                  <GhostBtn $w={42}>
                    <svg width="24" height="24" viewBox="0 0 24 24"><path d="M3 8h15l-3-3M21 16H6l3 3M3 8c-2 3-1 8 3 8M21 16c2-3 1-8-3-8" fill="none" stroke="#7a7a7a" strokeWidth="1.5" /></svg>
                  </GhostBtn>
                  <GhostBtn $w={42}>
                    <svg width="26" height="24" viewBox="0 0 26 24"><path d="M4 12a9 9 0 0 1 17-4M22 12a9 9 0 0 1-17 4M9 9l7 7M16 9l-7 7" fill="none" stroke="#7a7a7a" strokeWidth="1.5" /></svg>
                  </GhostBtn>
                </ArrowheadBtnRow>
              </ArrowheadTools>
            </ArrowheadRows>
            <PanelRule $mt={16} />
            <StrokeRow $mt={30}>
              <PropertiesBtn>Properties...</PropertiesBtn>
              <PressureLabel>Pressure:</PressureLabel>
              <PressureBox />
            </StrokeRow>
          </StrokeBody>

          <TabBar $h={53}>
            <GripSlot><Grip /></GripSlot>
            <Tab>Layers</Tab>
            <PlainTab>Symbols</PlainTab>
            <PlainTab>Styles</PlainTab>
            <PlainTab>Quick FX</PlainTab>
            <BurgerSlot><Burger /></BurgerSlot>
          </TabBar>
          <OpacityRow>
            <OpacityLabel>Opacity:</OpacityLabel>
            <OpacityField>100 %<Chev c="#ddd" /></OpacityField>
            <BlendSelect>Normal<Chev c="#ddd" /></BlendSelect>
            <svg width="26" height="26" viewBox="0 0 26 26"><circle cx="13" cy="13" r="8" fill="none" stroke="#a0a0a0" strokeWidth="5" /><circle cx="13" cy="13" r="10" fill="none" stroke="#a0a0a0" strokeWidth="3.5" strokeDasharray="3.8 4" /></svg>
            <svg width="20" height="26" viewBox="0 0 20 26"><path d="M5 12V7a5 5 0 0 1 10 0" fill="none" stroke="#a0a0a0" strokeWidth="2" /><rect x="2" y="11" width="16" height="14" rx="2" fill="#a0a0a0" /></svg>
          </OpacityRow>
          <LayersArea>
            <LayerList>
              {layers.map((layer, i) => (
                <LayerRow key={i}>
                  <LayerKind>
                    <svg width="20" height="22" viewBox="0 0 20 22">
                      <rect x="1" y="1" width="8" height="8" fill="#a8a8a8" />
                      <path d="M15 3l4 6h-8z" fill="#a8a8a8" />
                      <circle cx="5" cy="15" r="4" fill="#a8a8a8" />
                      <path d="M15 11l4 5-4 5-4-5z" fill="#a8a8a8" />
                    </svg>
                  </LayerKind>
                  <LayerThumbCell>
                    <LayerThumb>
                      <ThumbBar style={{ marginLeft: layer.offset, width: layer.width }} />
                    </LayerThumb>
                  </LayerThumbCell>
                  <LayerName>
                    Rectangle
                    <LayerDot />
                  </LayerName>
                </LayerRow>
              ))}
            </LayerList>
          </LayersArea>
          <LayerTools>
            <StackButton>
              <svg width="26" height="26" viewBox="0 0 26 26"><rect x="1" y="1" width="17" height="17" rx="2" fill="none" stroke="#bbb" strokeWidth="1.8" /><path d="M21 5v15a1 1 0 0 1-1 1H5M25 9v14a1 1 0 0 1-1 1H9" fill="none" stroke="#999" strokeWidth="1.6" /></svg>
            </StackButton>
            <LayerToolIcons>
              <svg width="24" height="22" viewBox="0 0 24 22"><rect width="24" height="22" rx="2" fill="#aaa" /><circle cx="12" cy="11" r="6" fill="#333" /></svg>
              <svg width="24" height="24" viewBox="0 0 24 24"><circle cx="12" cy="12" r="11" fill="none" stroke="#aaa" strokeWidth="1.4" /><path d="M19 7a9 9 0 0 1-13 12z" fill="#aaa" /></svg>
              <svg width="19" height="24" viewBox="0 0 19 24"><path d="M0 1h19M0 23h19" stroke="#aaa" strokeWidth="1.4" /><text x="-1" y="19" fill="#aaa" fontSize="17" fontWeight="700" fontFamily="Liberation Sans, sans-serif">FX</text></svg>
              <svg width="24" height="24" viewBox="0 0 24 24"><path d="M6 2c4-1 9-1 13 0l4 21H1zM4 13h17M2 19h20M10 2L8 23M15 2l2 21" fill="none" stroke="#aaa" strokeWidth="1.2" /></svg>
            </LayerToolIcons>
            <LayerToolIconsEnd>
              <svg width="21" height="24" viewBox="0 0 21 24"><path d="M13 1H1v22h17V7" fill="none" stroke="#aaa" strokeWidth="1.5" /><path d="M4 9h10M4 13h10M4 17h10" stroke="#aaa" strokeWidth="2" /><path d="M17 0v6M14 3h6" stroke="#aaa" strokeWidth="1.2" /></svg>
              <svg width="18" height="24" viewBox="0 0 18 24"><rect x="1" y="1" width="16" height="22" rx="1" fill="none" stroke="#aaa" strokeWidth="1.4" /><path d="M6 6h3v3H6zM9 9h3v3H9zM6 12h3v3H6zM9 15h3v3H9z" fill="#aaa" /></svg>
              <svg width="18" height="24" viewBox="0 0 18 24"><path d="M0 4h18M6 4V1h6v3M2 6v17h14V6M7 8v12M11 8v12" fill="none" stroke="#aaa" strokeWidth="1.4" /></svg>
            </LayerToolIconsEnd>
          </LayerTools>

          <TabBar $h={53}>
            <GripSlot><Grip /></GripSlot>
            <Tab>Transform</Tab>
            <PlainTab>Navigator</PlainTab>
            <PlainTab>History</PlainTab>
            <BurgerSlot><Burger /></BurgerSlot>
          </TabBar>
          <TransformBody>
            <AnchorGrid>
              {Array.from({ length: 9 }).map((_, i) => <AnchorDot key={i} $active={i === 0} />)}
            </AnchorGrid>
            <TransformFields>
              <FieldLabel>X:</FieldLabel><DarkField>34,8 mm</DarkField>
              <FieldLabel>W:</FieldLabel><DarkField>137,1 mm</DarkField>
              <FieldLabel>Y:</FieldLabel><DarkField>49,7 mm</DarkField>
              <FieldLabel>H:</FieldLabel><DarkField>178,8 mm</DarkField>
              <FieldLabel $mt={10}>R:</FieldLabel><DarkField $mt={10}>0 °<Chev c="#ddd" /></DarkField>
              <FieldLabel $mt={10}>S:</FieldLabel><DarkField $mt={10}>0 °<Chev c="#ddd" /></DarkField>
            </TransformFields>
            <LinkSlot>
              <svg width="20" height="38" viewBox="0 0 20 38"><path d="M5 15V4a2 2 0 0 1 2-2h6a2 2 0 0 1 2 2v11M5 23v11a2 2 0 0 0 2 2h6a2 2 0 0 0 2-2V23M1 19h18" fill="none" stroke="#a0a0a0" strokeWidth="1.6" /></svg>
            </LinkSlot>
            <TransformOrigin>
              <OriginBtn $w={53}>
                <svg width="30" height="28" viewBox="0 0 30 28"><path d="M2 8V1h26v26h-7M1 1h6M25 27h3" fill="none" stroke="#747474" strokeWidth="1.5" strokeDasharray="8 4" /><rect x="1" y="13" width="16" height="14" rx="4" fill="#7a7a7a" /></svg>
              </OriginBtn>
              <OriginBtn $w={24}><Chev c="#ccc" /></OriginBtn>
            </TransformOrigin>
          </TransformBody>
        </RightPanel>
      </Workspace>

      <StatusBar>
        <span>
          4 objects selected. <b>Drag</b> to move selection. <b>Click</b> another object to select it. <b>Click</b> on an empty area to deselect selection. <b>Return</b> to enter move/duplicate values.
        </span>
      </StatusBar>

      <Tooltip>Align Left</Tooltip>
    </Root>
  );
};

/* ---------- shell ---------- */

const Root = styled.div`
  position: relative;
  width: 3840px;
  height: 2160px;
  display: flex;
  flex-direction: column;
  overflow: hidden;
  background: #383838;
  color: #d8d8d8;
`;

const TitleBar = styled.div`
  height: 57px;
  display: flex;
  align-items: center;
  background: #2a2a2a;
`;
const LogoSlot = styled.div`
  width: 101px;
  padding-left: 21px;
  display: flex;
`;
const MenuList = styled.div`
  display: flex;
  flex: 1;
`;
const MenuItem = styled.span`
  color: #e6e6e6;
  margin-right: 47px;
  font-size: 20px;
  &:nth-child(3) { margin-right: 45px; }
  &:nth-child(5) { margin-right: 49px; }
  &:nth-child(6) { margin-right: 49px; }
`;
const WindowButtons = styled.div`
  display: flex;
  align-items: center;
  gap: 34px;
  padding-right: 18px;
`;

const MainToolbar = styled.div`
  height: 81px;
  display: flex;
  align-items: center;
  gap: 39px;
  background: #383838;
  border-bottom: 2px solid #222;
`;
const LeftCluster = styled.div`
  width: 271px;
  padding-left: 36px;
  display: flex;
  align-items: center;
`;
const PersonaButton = styled.div`
  width: 60px;
  height: 60px;
  border-radius: 5px;
  background: #2a2a2a;
  display: flex;
  align-items: center;
  justify-content: center;
`;
const ClusterSep = styled.div<{ $ml?: number }>`
  width: 1px;
  height: 60px;
  margin-left: ${p => p.$ml ?? 0}px;
  background: #222;
`;
const ClusterSlot = styled.div`
  width: 78px;
  display: flex;
  justify-content: center;
`;
const BtnGroup = styled.div`
  display: flex;
  gap: 2px;
`;
const ToolButton = styled.div<{ $dark?: boolean; $narrow?: boolean }>`
  width: ${p => (p.$narrow ? 22 : 60)}px;
  height: 46px;
  border-radius: 3px;
  background: ${p => (p.$dark ? "#222" : "#464646")};
  svg { display: block; }
`;

const ContextBar = styled.div`
  height: 52px;
  padding: 3px 0 0 15px;
  display: flex;
  align-items: center;
  background: #363636;
  border-bottom: 3px solid #2a2a2a;
`;
const ObjectCount = styled.div`
  width: 104px;
  font-size: 20px;
  letter-spacing: 0;
  color: #d8d8d8;
`;
const CtxSep = styled.div<{ $l: number; $r: number }>`
  width: 1px;
  height: 36px;
  margin: 0 ${p => p.$r}px 0 ${p => p.$l}px;
  background: #222;
`;
const CtxButton = styled.div<{ $w: number; $ml?: number }>`
  width: ${p => p.$w}px;
  height: 36px;
  margin-left: ${p => p.$ml ?? 0}px;
  border-radius: 4px;
  background: #464646;
  display: flex;
  align-items: center;
  justify-content: center;
  gap: 6px;
  font-size: 20px;
  letter-spacing: -0.15px;
  color: #dcdcdc;
`;
const CheckBox = styled.div`
  width: 22px;
  height: 21px;
  margin-right: 8px;
  border-radius: 3px;
  background: #1f1f1f;
  display: flex;
  align-items: center;
  justify-content: center;
`;
const AutoLabel = styled.div`
  width: 117px;
  letter-spacing: -0.2px;
  color: #8f8f8f;
  white-space: nowrap;
`;
const DefaultSelect = styled.div`
  width: 134px;
  height: 29px;
  padding: 0 7px;
  border-radius: 3px;
  background: #464646;
  display: flex;
  align-items: center;
  justify-content: space-between;
  letter-spacing: -0.05px;
  color: #e6e6e6;
`;
const CtxGroup = styled.div<{ $ml?: number }>`
  display: flex;
  gap: 2px;
  margin-left: ${p => p.$ml ?? 0}px;
`;
const CtxIconBtn = styled.div`
  width: 45px;
  height: 32px;
  border-radius: 3px;
  background: #464646;
  svg { display: block; }
`;

const Workspace = styled.div`
  flex: 1;
  min-height: 0;
  display: flex;
  background: #333;
`;

/* ---------- tools ---------- */

const ToolColumn = styled.div`
  width: 80px;
  padding-top: 4px;
  display: flex;
  flex-direction: column;
  align-items: center;
  background: #383838;
`;
const GradientDefs = styled.svg`
  position: absolute;
`;
const ToolSlot = styled.div<{ $active?: boolean; $more?: boolean }>`
  position: relative;
  flex: none;
  width: 52px;
  height: 54px;
  display: flex;
  align-items: center;
  justify-content: center;
  ${p => p.$active && "background: #232323; height: 52px; margin-bottom: 2px; border-radius: 6px;"}
  ${p =>
    p.$more &&
    `&::after {
      content: "";
      position: absolute;
      right: 6px;
      bottom: 7px;
      border-style: solid;
      border-width: 0 0 8px 8px;
      border-color: transparent transparent #e0e0e0 transparent;
    }`}
`;
const SwatchSlot = styled.div`
  margin-top: 40px;
  display: flex;
  justify-content: center;
`;

/* ---------- panels ---------- */

const TabBar = styled.div<{ $h?: number }>`
  height: ${p => p.$h ?? 51}px;
  flex: none;
  display: flex;
  align-items: flex-end;
  background: #2a2a2a;
  ${p => p.$h && "> div { height: 49px; padding-bottom: 5px; }"}
`;
const GripSlot = styled.div`
  width: 31px;
  height: 48px;
  padding: 0 0 2px 14px;
  display: flex;
  align-items: center;
`;
const GripMark = styled.span`
  display: flex;
  gap: 4px;
  i { display: block; width: 2px; height: 14px; background: #666; }
`;
const BurgerSlot = styled.div`
  margin-left: auto;
  height: 48px;
  padding: 0 14px 2px 0;
  display: flex;
  align-items: center;
`;
const BurgerMark = styled.span`
  display: flex;
  flex-direction: column;
  gap: 3px;
  i { display: block; width: 18px; height: 4px; background: #8e8e8e; }
`;
const PlainTab = styled.div`
  height: 48px;
  padding: 0 9px 2px;
  display: flex;
  align-items: center;
  color: #a2a2a2;
`;
const Tab = styled.div`
  height: 48px;
  padding: 0 12px 2px 9px;
  display: flex;
  align-items: center;
  background: #383838;
  color: #e2e2e2;
  & + ${PlainTab} { margin-left: -2px; }
`;
const AssetsTab = styled(Tab)`
  margin-left: 5px;
  padding-left: 7px;
  padding-right: 11px;
`;

const AssetsPanel = styled.div`
  width: 391px;
  display: flex;
  flex-direction: column;
  background: #2c2c2c;
`;
const AssetsSearch = styled.div`
  height: 97px;
  flex: none;
  margin-left: 2px;
  padding: 8px 7px;
  background: #383838;
`;
const SearchField = styled.div`
  height: 35px;
  padding-left: 9px;
  display: flex;
  align-items: center;
  gap: 8px;
  border-radius: 4px;
  background: #212121;
  letter-spacing: -0.9px;
  color: #7c7c7c;
`;
const CategorySelect = styled.div`
  width: 202px;
  height: 36px;
  margin: 9px 0 0 2px;
  padding: 0 6px 0 6px;
  display: flex;
  align-items: center;
  border-radius: 3px;
  background: #464646;
`;
const CategoryName = styled.span`
  flex: 1;
  margin-left: 13px;
  letter-spacing: -0.9px;
  color: #dcdcdc;
`;
const AssetsScroll = styled.div`
  flex: 1;
  min-height: 0;
  padding: 11px 9px 0 11px;
`;
const AssetCard = styled.div`
  height: 1728px;
  border-radius: 6px;
  background: #383838;
`;
const CardHeader = styled.div`
  height: 45px;
  padding: 3px 20px 0 6px;
  display: flex;
  align-items: center;
`;
const CardTitle = styled.div`
  flex: 1;
  margin-left: 34px;
  font-size: 20px;
  letter-spacing: -0.3px;
  color: #c4c4c4;
`;
const MiniBurger = styled.span`
  display: flex;
  flex-direction: column;
  gap: 2px;
  i { display: block; width: 13px; height: 3px; background: #8e8e8e; }
`;
const ArrowGrid = styled.div`
  margin-left: 1.5px;
  display: grid;
  grid-template-columns: repeat(3, 105px);
  grid-auto-rows: 105px;
`;
const ArrowSvg = styled.svg`
  display: block;
  width: 105px;
  height: 105px;
  overflow: visible;
`;
const ArrowShape = styled.path<{ $kind: ArrowKind }>`
  stroke-linejoin: round;
  ${p => p.$kind === "dark" && "fill: #1f1c1c;"}
  ${p => p.$kind === "thin" && "fill: #0a0808; stroke: #f2f2f2; stroke-width: 1.3;"}
  ${p => p.$kind === "split" && "fill: #fff; stroke: #fff; stroke-width: 1.6;"}
  ${p => p.$kind === "thick" && "fill: #000; stroke: #fff; stroke-width: 3;"}
  ${p => p.$kind === "red" && "fill: #ee3124;"}
`;

const Gutter = styled.div<{ $w: number }>`
  width: ${p => p.$w}px;
  background: #333;
`;

/* ---------- canvas ---------- */

const CenterColumn = styled.div`
  flex: 1;
  min-width: 0;
  display: flex;
  flex-direction: column;
`;
const DocBar = styled.div`
  height: 45px;
  flex: none;
  margin-top: 1px;
  padding: 0 14px 0 17px;
  display: flex;
  align-items: center;
  justify-content: space-between;
  background: #383838;
`;
const DocTitle = styled.span`
  color: #d4d4d4;
`;
const CenterBody = styled.div`
  flex: 1;
  min-height: 0;
  display: flex;
`;
const CanvasColumn = styled.div`
  flex: 1;
  min-width: 0;
  display: flex;
  flex-direction: column;
`;
const Canvas = styled.div`
  flex: 1;
  min-height: 0;
  padding-right: 4px;
  display: flex;
  align-items: center;
  justify-content: center;
  background: #242424;
`;
const Page = styled.div`
  position: relative;
  width: 1203px;
  height: 1703px;
  flex: none;
  background: #fff;
`;
const Shape = styled.div<{ $x: number; $y: number; $w: number; $h: number }>`
  position: absolute;
  left: ${p => p.$x}px;
  top: ${p => p.$y}px;
  width: ${p => p.$w}px;
  height: ${p => p.$h}px;
  background: #ebebeb;
  border: 2px solid #3b8be0;
`;
const Selection = styled.div`
  position: absolute;
  left: 200px;
  top: 285px;
  width: 788px;
  height: 1026px;
  border: 2px solid #8cbcf0;
  border-width: 2px 1.5px 2px 1.5px;
`;
const RotateStem = styled.div`
  position: absolute;
  left: 391px;
  top: -54px;
  width: 2px;
  height: 52px;
  background: #8cbcf0;
`;
const Handle = styled.div<{ $x: number; $y: number }>`
  position: absolute;
  left: ${p => p.$x - 9}px;
  top: ${p => p.$y - 10}px;
  width: 16px;
  height: 16px;
  border-radius: 50%;
  background: #fff;
  border: 2px solid #5aa0ea;
`;
const HScroll = styled.div`
  height: 32px;
  flex: none;
  padding: 0 9px;
  display: flex;
  align-items: center;
  justify-content: space-between;
  background: #404040;
`;
const ScrollArrowLeft = styled.span`
  border-style: solid;
  border-width: 9px 10px 9px 0;
  border-color: transparent #808080 transparent transparent;
`;
const ScrollArrowRight = styled.span`
  border-style: solid;
  border-width: 9px 0 9px 10px;
  border-color: transparent transparent transparent #808080;
`;
const HThumb = styled.div`
  width: 951px;
  height: 12px;
  margin-left: 8px;
  border-radius: 6px;
  background: #808080;
`;
const VScroll = styled.div`
  width: 32px;
  flex: none;
  padding: 12px 0 40px 11px;
  display: flex;
  flex-direction: column;
  background: #404040;
`;
const ScrollArrowUp = styled.span`
  width: 0;
  margin-left: -2px;
  border-style: solid;
  border-width: 0 7px 10px 7px;
  border-color: transparent transparent #808080 transparent;
`;
const ScrollArrowDown = styled.span`
  width: 0;
  margin-left: -2px;
  margin-top: auto;
  border-style: solid;
  border-width: 10px 7px 0 7px;
  border-color: #808080 transparent transparent transparent;
`;
const VThumb = styled.div`
  width: 10px;
  height: 519px;
  margin-top: 643px;
  border-radius: 5px 5px 0 0;
  background: #808080;
`;

/* ---------- right panel ---------- */

const RightPanel = styled.div`
  width: 472px;
  display: flex;
  flex-direction: column;
  background: #2a2a2a;
`;
const StrokeBody = styled.div`
  height: 552px;
  flex: none;
  background: #383838;
  overflow: hidden;
`;
const StrokeRow = styled.div<{ $mt: number }>`
  margin-top: ${p => p.$mt}px;
  padding: 0 9px 0 12px;
  display: flex;
  align-items: center;
`;
const RowLabel = styled.div<{ $dim?: boolean }>`
  width: 68px;
  flex: none;
  padding-bottom: 3px;
  color: ${p => (p.$dim ? "#6e6e6e" : "#a4a4a4")};
`;
const Seg = styled.div<{ $on?: boolean }>`
  width: 46px;
  height: 35px;
  margin-right: 2px;
  border-radius: 3px;
  background: ${p => (p.$on ? "#232323" : "#464646")};
`;
const SegIcon = styled.svg.attrs({ viewBox: "0 0 46 35" })`
  display: block;
  width: 46px;
  height: 35px;
`;
const SliderTrack = styled.div`
  position: relative;
  width: 288px;
  height: 9px;
  margin-left: 2px;
  border-radius: 5px;
  background: #212121;
`;
const SliderThumb = styled.div`
  position: absolute;
  left: 0;
  top: -4px;
  width: 18px;
  height: 17px;
  border-radius: 50%;
  background: #e4e4e4;
`;
const ValueField = styled.div<{ $w: number; $ml: number }>`
  width: ${p => p.$w}px;
  height: 35px;
  margin-left: ${p => p.$ml}px;
  padding-left: 11px;
  display: flex;
  align-items: center;
  border-radius: 4px;
  background: #212121;
  color: #e8e8e8;
`;
const MitreLabel = styled.div`
  margin-left: auto;
  color: #a4a4a4;
`;
const PanelRule = styled.div<{ $mt: number }>`
  height: 1px;
  margin: ${p => p.$mt}px 6px 0 7px;
  background: #262626;
`;
const ScaleCheck = styled.div`
  width: 21px;
  height: 21px;
  margin-left: 115px;
  border-radius: 3px;
  background: #212121;
`;
const ScaleLabel = styled.div`
  margin-left: 9px;
  color: #a4a4a4;
  white-space: nowrap;
`;
const ArrowheadRows = styled.div`
  margin-top: 23px;
  display: flex;
  align-items: flex-start;
  > svg { margin-top: 18px; flex: none; }
`;
const ArrowheadFields = styled.div`
  width: 280px;
  flex: none;
`;
const GhostSelect = styled.div<{ $w: number }>`
  width: ${p => p.$w}px;
  flex: none;
  height: 36px;
  margin: 0 10px 0 -2px;
  padding-right: 8px;
  display: flex;
  align-items: center;
  justify-content: flex-end;
  border-radius: 3px;
  background: #343434;
`;
const ArrowheadTools = styled.div`
  margin-left: 68px;
  display: flex;
  flex-direction: column;
  gap: 11px;
`;
const ArrowheadBtnRow = styled.div<{ $gap?: number }>`
  display: flex;
  gap: ${p => p.$gap ?? 2}px;
  padding-left: ${p => (p.$gap ? 2 : 0)}px;
`;
const GhostBtn = styled.div<{ $w: number; $on?: boolean }>`
  width: ${p => p.$w}px;
  height: 33px;
  display: flex;
  align-items: center;
  justify-content: center;
  border-radius: 3px;
  background: ${p => (p.$on ? "#2a2a2a" : "#424242")};
`;
const PropertiesBtn = styled.div`
  width: 141px;
  height: 36px;
  display: flex;
  align-items: center;
  justify-content: center;
  border-radius: 4px;
  background: #464646;
  color: #dcdcdc;
`;
const PressureLabel = styled.div`
  width: 84px;
  margin-left: 10px;
  color: #a4a4a4;
`;
const PressureBox = styled.div`
  width: 138px;
  height: 33px;
  border: 4px solid #424242;
  border-top: 2px solid #8a8a8a;
  background: #4a4a4a;
  outline: 1px solid #424242;
`;

const OpacityRow = styled.div`
  height: 51px;
  flex: none;
  padding: 0 0 2px 14px;
  display: flex;
  align-items: center;
  background: #383838;
  svg:last-child { margin-left: 15px; }
`;
const OpacityLabel = styled.div`
  width: 70px;
  color: #a4a4a4;
`;
const OpacityField = styled.div`
  width: 96px;
  height: 35px;
  padding: 0 8px 0 12px;
  display: flex;
  align-items: center;
  justify-content: space-between;
  border-radius: 4px;
  background: #212121;
  white-space: nowrap;
  color: #e8e8e8;
`;
const BlendSelect = styled.div`
  width: 199px;
  height: 31px;
  margin: 0 8px 0 9px;
  padding: 0 8px;
  display: flex;
  align-items: center;
  justify-content: space-between;
  border-radius: 3px;
  background: #464646;
  color: #e8e8e8;
`;
const LayersArea = styled.div`
  flex: 1;
  min-height: 0;
`;
const LayerList = styled.div`
  width: 441px;
  padding: 2px;
  display: flex;
  flex-direction: column;
  gap: 2px;
  background: #000;
`;
const LayerRow = styled.div`
  height: 63px;
  display: flex;
  gap: 2px;
`;
const LayerKind = styled.div`
  width: 28px;
  display: flex;
  align-items: center;
  justify-content: center;
  background: #4e6b8f;
`;
const LayerThumbCell = styled.div`
  width: 63px;
  display: flex;
  align-items: center;
  justify-content: center;
  background: #4e6b8f;
`;
const LayerThumb = styled.div`
  width: 55px;
  height: 55px;
  background: #2a2a2a;
`;
const ThumbBar = styled.div`
  height: 100%;
  background: #ebebeb;
`;
const LayerName = styled.div`
  flex: 1;
  padding: 0 19px 0 6px;
  display: flex;
  align-items: center;
  justify-content: space-between;
  background: #4e6b8f;
  font-size: 20px;
  letter-spacing: -0.3px;
  color: #a3b2c4;
`;
const LayerDot = styled.span`
  width: 16px;
  height: 16px;
  border-radius: 50%;
  background: #a0a0a0;
`;
const LayerTools = styled.div`
  height: 46px;
  flex: none;
  padding-left: 9px;
  display: flex;
  align-items: center;
  background: #383838;
`;
const StackButton = styled.div`
  width: 37px;
  height: 35px;
  display: flex;
  align-items: center;
  justify-content: center;
  background: #2a2a2a;
`;
const LayerToolIcons = styled.div`
  margin-left: 139px;
  display: flex;
  align-items: center;
  gap: 12px;
`;
const LayerToolIconsEnd = styled.div`
  margin-left: 58px;
  display: flex;
  align-items: center;
  gap: 15px;
`;

const TransformBody = styled.div`
  flex: none;
  height: 228px;
  position: relative;
  display: flex;
  align-items: flex-start;
  background: #383838;
`;
const AnchorGrid = styled.div`
  width: 62px;
  height: 62px;
  margin: 61px 0 0 29px;
  display: grid;
  grid-template-columns: repeat(3, 10px);
  grid-auto-rows: 10px;
  gap: 16px;
  background: linear-gradient(#6e6e6e, #6e6e6e) center / 52px 52px no-repeat;
`;
const AnchorDot = styled.span<{ $active?: boolean }>`
  background: ${p => (p.$active ? "#fff" : "#b6b6b6")};
  ${p => p.$active && "transform: scale(1.6) translate(-1px, -1px);"}
`;
const TransformFields = styled.div`
  width: 323px;
  margin: 23px 0 0 9px;
  display: grid;
  grid-template-columns: 44px 114px 51px 114px;
  grid-template-rows: 35px 35px 45px;
  row-gap: 7px;
`;
const FieldLabel = styled.div<{ $mt?: number }>`
  margin-top: ${p => p.$mt ?? 0}px;
  padding-right: 7px;
  display: flex;
  align-items: center;
  justify-content: flex-end;
  color: #a4a4a4;
`;
const DarkField = styled.div<{ $mt?: number }>`
  margin-top: ${p => p.$mt ?? 0}px;
  padding: 0 6px 0 11px;
  display: flex;
  align-items: center;
  justify-content: space-between;
  border-radius: 4px;
  background: #212121;
  color: #dedede;
`;
const LinkSlot = styled.div`
  margin: 41px 0 0 17px;
`;
const TransformOrigin = styled.div`
  position: absolute;
  left: 344px;
  top: 166px;
  display: flex;
  gap: 2px;
`;
const OriginBtn = styled.div<{ $w: number }>`
  width: ${p => p.$w}px;
  height: 46px;
  display: flex;
  align-items: center;
  justify-content: center;
  border-radius: 3px;
  background: #464646;
`;

const StatusBar = styled.div`
  height: 45px;
  flex: none;
  padding-left: 36px;
  display: flex;
  align-items: center;
  background: #383838;
  font-size: 20px;
  letter-spacing: -0.04px;
  white-space: nowrap;
  color: #a4a4a4;
  b { color: #f2f2f2; font-weight: 700; }
`;

const Tooltip = styled.div`
  position: absolute;
  left: 2172px;
  top: 111px;
  width: 113px;
  height: 46px;
  display: flex;
  align-items: center;
  justify-content: center;
  background: #f2f3f8;
  border-top: 2px solid #777;
  border-bottom: 2px solid #777;
  border-left: 1px solid #777;
  border-right: 1px solid #777;
  color: #555;
`;

export default App;
